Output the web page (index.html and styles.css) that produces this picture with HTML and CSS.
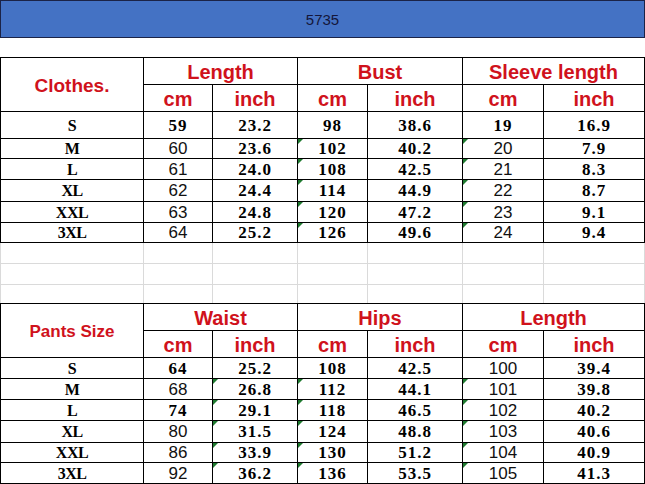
FILE: index.html
```html
<!DOCTYPE html>
<html>
<head>
<meta charset="utf-8">
<link rel="stylesheet" href="styles.css">
</head>
<body>
<div class="page">
  <div class="titlebar">5735</div>
  <div class="spacer"></div>

  <div class="sheet t1">
    <div class="c hd rs2 big">Clothes.</div>
    <div class="c hd cs2">Length</div>
    <div class="c hd cs2">Bust</div>
    <div class="c hd cs2">Sleeve length</div>
    <div class="c hd">cm</div><div class="c hd">inch</div>
    <div class="c hd">cm</div><div class="c hd">inch</div>
    <div class="c hd">cm</div><div class="c hd">inch</div>

    <div class="c lbl">S</div><div class="c num">59</div><div class="c num">23.2</div><div class="c num">98</div><div class="c num">38.6</div><div class="c num">19</div><div class="c num">16.9</div>
    <div class="c lbl">M</div><div class="c sans">60</div><div class="c num">23.6</div><div class="c num tri">102</div><div class="c num">40.2</div><div class="c sans tri">20</div><div class="c num">7.9</div>
    <div class="c lbl">L</div><div class="c sans">61</div><div class="c num">24.0</div><div class="c num tri">108</div><div class="c num">42.5</div><div class="c sans tri">21</div><div class="c num">8.3</div>
    <div class="c lbl">XL</div><div class="c sans">62</div><div class="c num">24.4</div><div class="c num tri">114</div><div class="c num">44.9</div><div class="c sans tri">22</div><div class="c num">8.7</div>
    <div class="c lbl">XXL</div><div class="c sans">63</div><div class="c num">24.8</div><div class="c num tri">120</div><div class="c num">47.2</div><div class="c sans tri">23</div><div class="c num">9.1</div>
    <div class="c lbl">3XL</div><div class="c sans">64</div><div class="c num">25.2</div><div class="c num tri">126</div><div class="c num">49.6</div><div class="c sans tri">24</div><div class="c num">9.4</div>
  </div>

  <div class="blank">
    <div class="g"></div><div class="g"></div><div class="g"></div><div class="g"></div><div class="g"></div><div class="g"></div><div class="g"></div>
    <div class="g"></div><div class="g"></div><div class="g"></div><div class="g"></div><div class="g"></div><div class="g"></div><div class="g"></div>
    <div class="g last"></div><div class="g last"></div><div class="g last"></div><div class="g last"></div><div class="g last"></div><div class="g last"></div><div class="g last"></div>
  </div>

  <div class="sheet t2">
    <div class="c hd rs2 mid">Pants Size</div>
    <div class="c hd cs2">Waist</div>
    <div class="c hd cs2">Hips</div>
    <div class="c hd cs2">Length</div>
    <div class="c hd">cm</div><div class="c hd">inch</div>
    <div class="c hd">cm</div><div class="c hd">inch</div>
    <div class="c hd">cm</div><div class="c hd">inch</div>

    <div class="c lbl">S</div><div class="c num">64</div><div class="c num">25.2</div><div class="c num">108</div><div class="c num">42.5</div><div class="c sans">100</div><div class="c num">39.4</div>
    <div class="c lbl">M</div><div class="c sans">68</div><div class="c num tri">26.8</div><div class="c num tri">112</div><div class="c num">44.1</div><div class="c sans tri">101</div><div class="c num">39.8</div>
    <div class="c lbl">L</div><div class="c num">74</div><div class="c num tri">29.1</div><div class="c num tri">118</div><div class="c num">46.5</div><div class="c sans tri">102</div><div class="c num">40.2</div>
    <div class="c lbl">XL</div><div class="c sans">80</div><div class="c num tri">31.5</div><div class="c num tri">124</div><div class="c num">48.8</div><div class="c sans tri">103</div><div class="c num">40.6</div>
    <div class="c lbl">XXL</div><div class="c sans">86</div><div class="c num tri">33.9</div><div class="c num tri">130</div><div class="c num">51.2</div><div class="c sans tri">104</div><div class="c num">40.9</div>
    <div class="c lbl">3XL</div><div class="c sans">92</div><div class="c num tri">36.2</div><div class="c num tri">136</div><div class="c num">53.5</div><div class="c sans tri">105</div><div class="c num">41.3</div>
  </div>
</div>
</body>
</html>
```

FILE: styles.css
```css
* { box-sizing: border-box; }
html, body { margin: 0; padding: 0; background: #fff; }
body { width: 645px; height: 484px; overflow: hidden; }

.page { width: 645px; }

.titlebar {
  height: 38px;
  background: #4472c4;
  border: 1px solid #1b2347;
  display: flex;
  align-items: center;
  justify-content: center;
  font-family: "Liberation Sans", Arial, sans-serif;
  font-size: 15px;
  color: #14163a;
}

.spacer { height: 19px; }

.sheet {
  display: grid;
  grid-template-columns: 143px 69px 85px 70px 95px 81px 101px;
  border-left: 1px solid #000;
  border-top: 1px solid #000;
  width: 645px;
}
.t1 { grid-template-rows: 27px 27px 27px 20px 21px 22px 21px 20px; }
.t2 { grid-template-rows: 27px 27px 21px 21px 21px 22px 20px 21px; }

.c {
  position: relative;
  border-right: 1px solid #000;
  border-bottom: 1px solid #000;
  display: flex;
  align-items: center;
  justify-content: center;
  color: #000;
  white-space: nowrap;
}
.rs2 { grid-row: span 2; }
.cs2 { grid-column: span 2; }

.hd {
  font-family: "Liberation Sans", Arial, sans-serif;
  font-weight: bold;
  font-size: 20px;
  color: #d0121c;
  padding-top: 3px;
}
.hd.big { font-size: 19px; padding-top: 2px; }
.hd.mid { font-size: 17px; padding-top: 2px; }

.lbl {
  font-family: "Liberation Serif", "Times New Roman", serif;
  font-weight: bold;
  font-size: 16px;
  letter-spacing: -0.5px;
  padding-top: 1px;
}
.num {
  font-family: "Liberation Serif", "Times New Roman", serif;
  font-weight: bold;
  font-size: 17px;
  letter-spacing: 1px;
  padding-top: 1px;
}
.sans {
  font-family: "Liberation Sans", Arial, sans-serif;
  font-size: 17px;
  color: #111;
  padding-top: 1px;
}

.tri::before {
  content: "";
  position: absolute;
  top: 0;
  left: 0;
  border-top: 5px solid #1e7a2f;
  border-right: 5px solid transparent;
}

.blank {
  display: grid;
  grid-template-columns: 143px 69px 85px 70px 95px 81px 101px;
  grid-template-rows: 21px 21px 18px;
  border-left: 1px solid #dadada;
  width: 645px;
}
.g {
  border-right: 1px solid #dadada;
  border-bottom: 1px solid #dadada;
}
.g.last { border-bottom: none; }
```
